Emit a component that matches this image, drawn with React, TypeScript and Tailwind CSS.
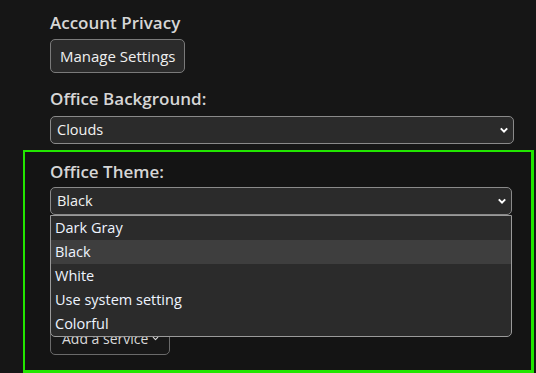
import { ChevronDown } from 'lucide-react'

const FONT = "font-['Segoe_UI','Open_Sans','Noto_Sans',sans-serif]"

function Select({ value }: { value: string }) {
  return (
    <div className="flex h-[28px] items-center justify-between rounded-[5px] border border-[#8a8a8a] bg-[#2b2b2b] pl-[6px] pr-[4px] text-[14.5px] text-[#f2f2f2]">
      <span>{value}</span>
      <svg width="10" height="8" viewBox="0 0 10 8">
        <path d="M1.8 2.4 L5 5.6 L8.2 2.4" fill="none" stroke="#ffffff" strokeWidth="2" />
      </svg>
    </div>
  )
}

const THEMES = ['Dark Gray', 'Black', 'White', 'Use system setting', 'Colorful']

export default function App() {
  return (
    <div className={`h-[373px] w-[536px] overflow-hidden bg-[#161616] pt-[11px] ${FONT}`}>
      <div className="pl-[50px] pr-[22px]">
        <h2 className="text-[17px] font-semibold leading-[24px] text-[#d6d6d6]">Account Privacy</h2>
        <button className="mt-[4px] h-[34px] rounded-[5px] border border-[#7a7a7a] bg-[#2b2b2b] px-[9px] text-[15px] text-[#f0f0f0]">
          Manage Settings
        </button>
        <h2 className="mt-[14px] text-[17px] font-semibold leading-[24px] text-[#d6d6d6]">Office Background:</h2>
        <div className="mt-[5px]">
          <Select value="Clouds" />
        </div>
      </div>

      <div className="mt-[6px] ml-[23px] mr-[2px] h-[223px] border-2 border-r-[3px] border-b-[3px] border-[#22e600] bg-[#141414] pl-[25px] pr-[19px] pt-[8px]">
        <h2 className="text-[17px] font-semibold leading-[24px] text-[#d6d6d6]">Office Theme:</h2>
        <div className="relative mt-[3px]">
          <Select value="Black" />
          <div className="absolute left-0 right-0 top-[28px] z-10 overflow-hidden rounded-b-[5px] border border-[#9a9a9a] bg-[#2b2b2b] text-[14.5px] text-[#eef4ff]">
            {THEMES.map((t) => (
              <div
                key={t}
                className={`flex h-[24px] items-center pl-[4px] ${t === 'Black' ? 'bg-[#3e3e3e]' : ''}`}
              >
                {t}
              </div>
            ))}
          </div>
          <button className="mt-[106px] flex h-[34px] items-center gap-[3px] rounded-[5px] border border-[#6a6a6a] bg-[#181818] pl-[11px] pr-[9px] text-[14px] text-[#d8d8d8]">
            Add a service
            <ChevronDown className="h-[9px] w-[9px]" strokeWidth={3} />
          </button>
        </div>
      </div>
    </div>
  )
}
